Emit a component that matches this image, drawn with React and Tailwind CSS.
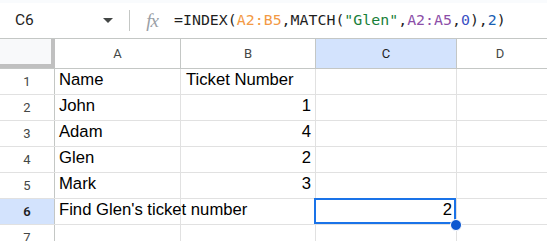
export default function App() {
  const rows = [
    { n: 1, a: "Name", b: "Ticket Number", bNum: false },
    { n: 2, a: "John", b: "1", bNum: true },
    { n: 3, a: "Adam", b: "4", bNum: true },
    { n: 4, a: "Glen", b: "2", bNum: true },
    { n: 5, a: "Mark", b: "3", bNum: true },
    { n: 6, a: "Find Glen's ticket number", b: "", bNum: false, c: "2", sel: true },
    { n: 7, a: "", b: "", bNum: false },
  ];
  const cellFont = "font-['Liberation_Sans',Arial,sans-serif] text-[16.67px] text-black";
  const hdrFont = "font-['Roboto','Liberation_Sans',sans-serif] text-[13px] text-[#444746]";
  return (
    <div className="w-[547px] h-[241px] overflow-hidden bg-white">
      <div className="h-[3px] bg-[#f9fbfd]" />
      <div className="h-[36px] flex items-center border-b border-[#c4c7c5]">
        <div className="w-[129px] h-full flex items-center justify-between pl-[15px] pr-[16px]">
          <span className="font-['Roboto','Liberation_Sans',sans-serif] text-[15.5px] text-[#1f1f1f] leading-none">C6</span>
          <svg width="10" height="5" viewBox="0 0 10 5">
            <path d="M0 0 L10 0 L5 5 Z" fill="#444746" />
          </svg>
        </div>
        <div className="w-px h-[21px] bg-[#c4c7c5]" />
        <div className="w-[44px] flex items-center justify-center">
          <span className="font-['Liberation_Serif',serif] italic text-[19px] text-[#9aa0a6] leading-none tracking-[-1px]">fx</span>
        </div>
        <div className="font-['DejaVu_Sans_Mono','Liberation_Mono',monospace] text-[14.9px] leading-none text-[#1f1f1f] whitespace-nowrap">
          <span>=INDEX(</span>
          <span className="text-[#f39a45]">A2:B5</span>
          <span>,MATCH(</span>
          <span className="text-[#188038]">"Glen"</span>
          <span>,</span>
          <span className="text-[#8c4fa8]">A2:A5</span>
          <span>,</span>
          <span className="text-[#3a50c4]">0</span>
          <span>),</span>
          <span className="text-[#1a5fb4]">2</span>
          <span>)</span>
        </div>
      </div>
      <div className="h-[30px] flex border-b border-[#c4c7c5]">
        <div className="w-[55px] h-full bg-[#f8f9fa] border-r-4 border-b-4 border-[#c0c0c0]" />
        <div className={`w-[126px] h-full flex items-center justify-center border-r border-[#c4c7c5] ${hdrFont}`}>A</div>
        <div className={`w-[135px] h-full flex items-center justify-center border-r border-[#c4c7c5] ${hdrFont}`}>B</div>
        <div className={`w-[141px] h-full flex items-center justify-center border-r border-[#c4c7c5] bg-[#d3e3fd] font-['Roboto','Liberation_Sans',sans-serif] text-[13px] text-[#1f1f1f]`}>C</div>
        <div className={`flex-1 h-full flex items-center justify-center ${hdrFont}`}>
          <span className="pr-[4px]">D</span>
        </div>
      </div>
      {rows.map((r) => (
        <div key={r.n} className="h-[26px] flex border-b border-[#e1e1e1]">
          <div
            className={`w-[55px] h-full flex items-center justify-center border-r border-[#c4c7c5] font-['Roboto','Liberation_Sans',sans-serif] text-[13px] ${
              r.sel ? "bg-[#d3e3fd] text-[#1f1f1f] font-semibold" : "text-[#444746]"
            }`}
          >
            {r.n}
          </div>
          <div className={`w-[126px] h-full flex items-end pb-[2px] pl-[4px] border-r border-[#e1e1e1] whitespace-nowrap overflow-visible ${cellFont}`}>
            <span className="relative z-10">{r.a}</span>
          </div>
          <div
            className={`w-[135px] h-full flex items-end pb-[2px] border-r border-[#e1e1e1] whitespace-nowrap ${cellFont} ${
              r.bNum ? "justify-end pr-[4px]" : "pl-[5px]"
            } ${r.sel ? "border-r-transparent" : ""}`}
          >
            {r.b}
          </div>
          <div className={`relative w-[141px] h-full flex items-end justify-end pb-[2px] pr-[4px] border-r border-[#e1e1e1] ${cellFont}`}>
            {r.c}
            {r.sel && (
              <>
                <div className="absolute left-[-2px] top-[-1px] w-[142px] h-[26px] border-2 border-[#1a73e8] pointer-events-none" />
                <div className="absolute left-[134px] top-[20px] w-[12px] h-[12px] rounded-full bg-[#0b57d0] border border-white z-20" />
              </>
            )}
          </div>
          <div className="flex-1 h-full" />
        </div>
      ))}
    </div>
  );
}
